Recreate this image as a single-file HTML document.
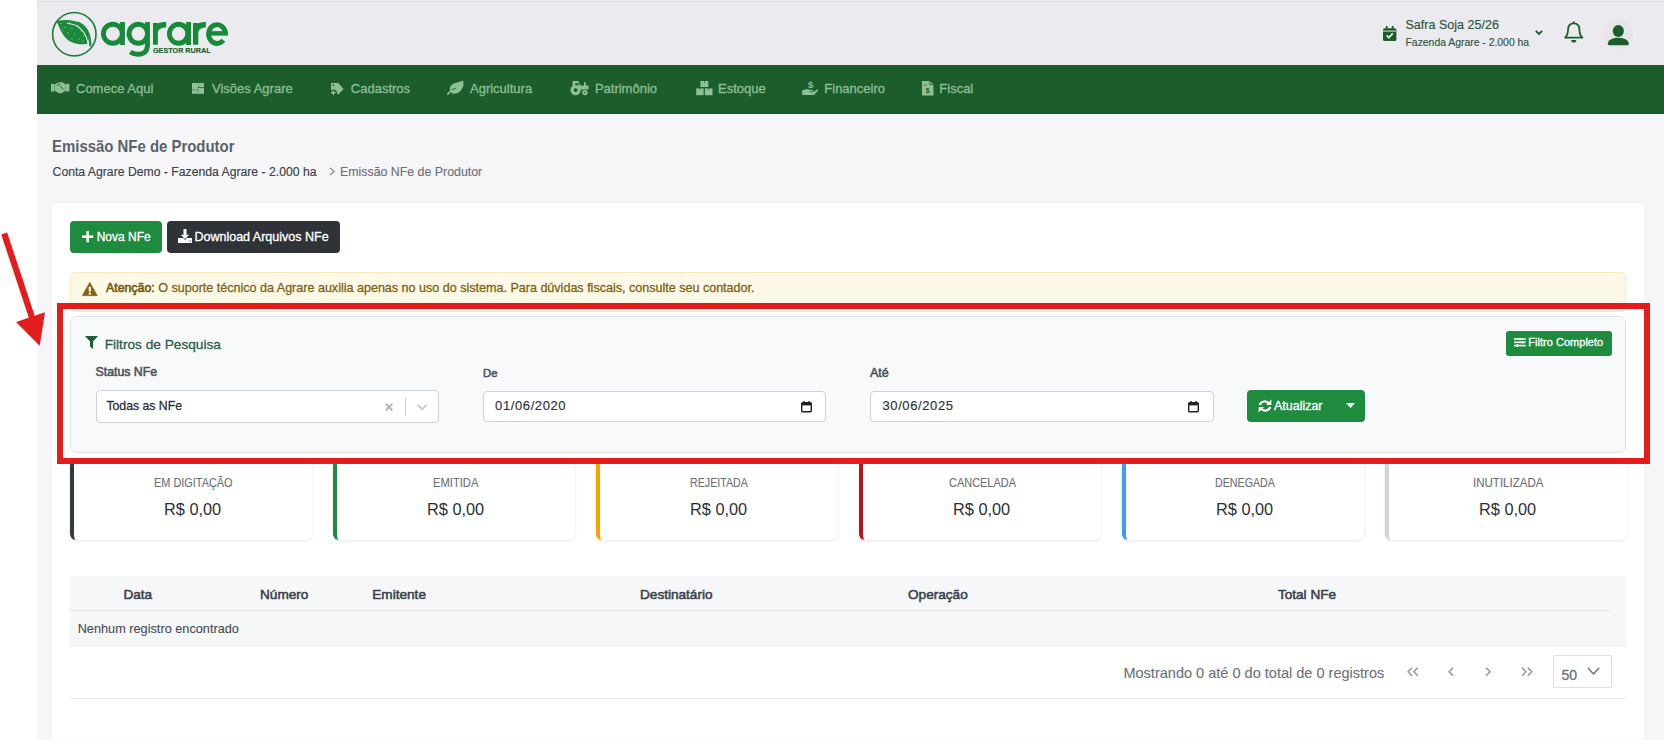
<!DOCTYPE html>
<html><head><meta charset="utf-8"><style>
html,body{margin:0;padding:0;}
body{width:1664px;height:740px;overflow:hidden;position:relative;background:#fff;font-family:"Liberation Sans",sans-serif;}
.t{position:absolute;white-space:nowrap;}
.b{position:absolute;box-sizing:border-box;}
svg.b{overflow:visible;}
</style></head><body>
<div class="b" style="left:37px;top:0px;width:1627px;height:740px;background:#f6f6f9"></div>
<div class="b" style="left:37px;top:0px;width:1627px;height:65px;background:#ebebef"></div>
<div class="b" style="left:37px;top:1px;width:1627px;height:1px;background:#dcdce2"></div>
<div class="b" style="left:37px;top:65px;width:1627px;height:49px;background:#1b5e2b"></div>
<svg class="b" style="left:48px;top:8px;width:52px;height:52px;" viewBox="0 0 52 52" preserveAspectRatio="none">
<circle cx="26.3" cy="26.2" r="21.7" fill="none" stroke="#1f7f3c" stroke-width="1.6"/>
<path d="M8.4,13 C19,10.5 31,12 37.5,19.5 C41.5,24 41.5,30 39.5,35.8 C30.5,37.5 22,35 16.8,29 C12.8,24.5 11,18 8.4,13 Z" fill="#1c8a3c"/>
<path d="M19,15.2 C30,16 38,22 40.6,37.8" fill="none" stroke="#ebebef" stroke-width="1.1"/><circle cx="13" cy="15.5" r="0.55" fill="#9fe0b0"/><circle cx="21.5" cy="13.8" r="0.55" fill="#9fe0b0"/><circle cx="17" cy="19.5" r="0.55" fill="#9fe0b0"/><circle cx="24" cy="20.5" r="0.55" fill="#9fe0b0"/><circle cx="30" cy="17" r="0.55" fill="#9fe0b0"/><circle cx="20" cy="25" r="0.55" fill="#9fe0b0"/><circle cx="27" cy="26" r="0.55" fill="#9fe0b0"/><circle cx="33" cy="23" r="0.55" fill="#9fe0b0"/><circle cx="24" cy="31" r="0.55" fill="#9fe0b0"/><circle cx="31" cy="31" r="0.55" fill="#9fe0b0"/><circle cx="35" cy="33" r="0.55" fill="#9fe0b0"/><circle cx="14.5" cy="22" r="0.55" fill="#9fe0b0"/><circle cx="36" cy="27.5" r="0.55" fill="#9fe0b0"/>
<path d="M29,14.2 C38,17.5 42.5,25 42.3,38.3" fill="none" stroke="#1c8a3c" stroke-width="2.2"/>
</svg>
<svg class="b" style="left:0px;top:0px;width:300px;height:70px;" viewBox="0 0 300 70" preserveAspectRatio="none">
<g fill="none" stroke="#178a3a" stroke-width="4.9">
<ellipse cx="112.85" cy="33.8" rx="9.45" ry="9.5"/>
<ellipse cx="138.3" cy="33.8" rx="9.25" ry="9.5"/>
<path d="M147.5,44 C147.5,53 142.5,54.2 138.2,54.2 C134.8,54.2 132.3,53.3 130.3,51.9"/>
<ellipse cx="178.6" cy="33.8" rx="9.2" ry="9.5"/>
<path d="M225.4,33.5 A8.4,9.4 0 1 0 223.3,40.3"/>
</g>
<g fill="#178a3a">
<rect x="120.1" y="22" width="4.8" height="23"/>
<rect x="145.1" y="22" width="4.8" height="23"/>
<rect x="186.1" y="22" width="4.9" height="23"/>
<rect x="208" y="31.1" width="19.9" height="4.5"/>
<path d="M153,44.8 V23 H157.9 V23.5 C159.5,22.5 162,22 166.2,22 V27.4 C162.5,27.4 159,28.6 157.9,31.6 V44.8 Z"/>
<path d="M193,44.8 V23 H198.3 V23.5 C199.8,22.5 202,22 205.9,22 V27.4 C202.5,27.4 199.3,28.6 198.3,31.6 V44.8 Z"/>
</g>
</svg>
<div class="t" style="left:153.00px;top:46.58px;font-size:7.23px;line-height:7.23px;font-weight:700;color:#1c5f2f;-webkit-text-stroke:0.15px #1c5f2f;">GESTOR RURAL</div>
<svg class="b" style="left:1382.8px;top:25.7px;width:13.400000000000091px;height:15.099999999999998px;" viewBox="0 0 13.4 15" preserveAspectRatio="none">
<rect x="0" y="2.2" width="13.4" height="12.8" rx="1.6" fill="#1b5e2b"/>
<rect x="2.8" y="0" width="1.8" height="3.6" fill="#1b5e2b"/>
<rect x="8.8" y="0" width="1.8" height="3.6" fill="#1b5e2b"/>
<rect x="0" y="4.6" width="13.4" height="0.9" fill="#ebebef"/>
<path d="M3.6,9.4 L5.8,11.6 L9.8,7.4" fill="none" stroke="#ebebef" stroke-width="1.7"/>
</svg>
<div class="t" style="left:1405.50px;top:18.58px;font-size:12.55px;line-height:12.55px;font-weight:400;color:#2f5540;-webkit-text-stroke:0.15px #2f5540;">Safra Soja 25/26</div>
<div class="t" style="left:1405.50px;top:37.50px;font-size:10.40px;line-height:10.40px;font-weight:400;color:#2f5540;-webkit-text-stroke:0.15px #2f5540;">Fazenda Agrare - 2.000 ha</div>
<svg class="b" style="left:1535px;top:30px;width:8px;height:5px;" viewBox="0 0 8 5" preserveAspectRatio="none"><path d="M0.8,0.8 L4,4 L7.2,0.8" fill="none" stroke="#1b5e2b" stroke-width="1.8"/></svg>
<svg class="b" style="left:1564px;top:21px;width:20px;height:22px;" viewBox="0 0 20 22" preserveAspectRatio="none">
<path d="M9.75,2.3 C6.2,2.3 4.2,4.9 4.1,8.6 C3.9,12.8 3.4,14.6 1.1,16.7 L18.4,16.7 C16.1,14.6 15.6,12.8 15.4,8.6 C15.3,4.9 13.3,2.3 9.75,2.3 Z" fill="none" stroke="#1b5e2b" stroke-width="1.8" stroke-linejoin="round"/>
<rect x="9" y="0.1" width="1.5" height="2.6" rx="0.7" fill="#1b5e2b"/>
<path d="M7.1,19 H12.4 C12.2,20.6 11.2,21.6 9.75,21.6 C8.3,21.6 7.3,20.6 7.1,19 Z" fill="#1b5e2b"/>
</svg>
<div class="b" style="left:1603px;top:19px;width:30px;height:30px;border-radius:50%;background:#e6e6ea"></div>
<svg class="b" style="left:1607px;top:24px;width:23px;height:22px;fill:#1b5e2b" viewBox="0 0 23 22" preserveAspectRatio="none">
<ellipse cx="11.3" cy="6.9" rx="5.6" ry="6"/>
<path d="M0.8,20.2 C0.8,16 5,13.8 11.3,13.8 C17.6,13.8 21.8,16 21.8,20.2 C21.8,21 21,21.2 20,21.2 L2.6,21.2 C1.6,21.2 0.8,21 0.8,20.2 Z"/>
</svg>
<div class="t" style="left:76.00px;top:81.80px;font-size:13.00px;line-height:13.00px;font-weight:400;color:#8fbf95;-webkit-text-stroke:0.3px #8fbf95;">Comece Aqui</div>
<div class="t" style="left:212.00px;top:81.80px;font-size:13.00px;line-height:13.00px;font-weight:400;color:#8fbf95;-webkit-text-stroke:0.3px #8fbf95;">Visões Agrare</div>
<div class="t" style="left:350.80px;top:81.80px;font-size:13.00px;line-height:13.00px;font-weight:400;color:#8fbf95;-webkit-text-stroke:0.3px #8fbf95;">Cadastros</div>
<div class="t" style="left:470.00px;top:81.80px;font-size:13.00px;line-height:13.00px;font-weight:400;color:#8fbf95;-webkit-text-stroke:0.3px #8fbf95;">Agricultura</div>
<div class="t" style="left:594.90px;top:81.80px;font-size:13.00px;line-height:13.00px;font-weight:400;color:#8fbf95;-webkit-text-stroke:0.3px #8fbf95;">Patrimônio</div>
<div class="t" style="left:718.00px;top:81.80px;font-size:13.00px;line-height:13.00px;font-weight:400;color:#8fbf95;-webkit-text-stroke:0.3px #8fbf95;">Estoque</div>
<div class="t" style="left:824.30px;top:81.80px;font-size:13.00px;line-height:13.00px;font-weight:400;color:#8fbf95;-webkit-text-stroke:0.3px #8fbf95;">Financeiro</div>
<div class="t" style="left:939.30px;top:81.80px;font-size:13.00px;line-height:13.00px;font-weight:400;color:#8fbf95;-webkit-text-stroke:0.3px #8fbf95;">Fiscal</div>
<svg class="b" style="left:51.3px;top:82px;width:18.400000000000006px;height:11.400000000000006px;fill:#8fbf95" viewBox="0 0 18.4 11.4" preserveAspectRatio="none">
<rect x="0" y="1.9" width="3.4" height="7.6"/>
<rect x="15" y="1.9" width="3.4" height="7.6"/>
<path d="M3.6,2.4 L7,0.6 C8.5,0 10.5,0 12,0.6 L14.8,2.4 L14.8,8.8 L11,11 C10,11.5 8.5,11.5 7.5,11 L3.6,8.8 Z"/>
<path d="M5.6,3.8 L9.2,1.6 M8.4,3.6 L12.6,7.6" stroke="#1b5e2b" stroke-width="0.9" fill="none"/>
</svg>
<svg class="b" style="left:192px;top:83px;width:12px;height:10.799999999999997px;fill:#8fbf95" viewBox="0 0 12 10.8" preserveAspectRatio="none">
<rect x="0" y="0" width="12" height="10.8"/>
<rect x="5.9" y="0" width="0.5" height="10.8" fill="#5c8a66"/>
<rect x="6" y="4" width="6" height="0.8" fill="#1b5e2b"/>
<rect x="0" y="6.6" width="6" height="0.7" fill="#4f7f5a"/>
</svg>
<svg class="b" style="left:330.7px;top:83px;width:12.600000000000023px;height:11.799999999999997px;fill:#8fbf95" viewBox="0 0 12.6 11.8" preserveAspectRatio="none">
<path d="M0,0 H7.3 L12.6,6 L7,11.8 L6.2,11 C6.4,8.6 5,6.6 2.6,6.6 C1.6,6.6 0.7,6.9 0,7.3 Z"/>
<rect x="1.5" y="7.6" width="1.6" height="4.2"/><rect x="0" y="8.9" width="4.6" height="1.5"/>
<circle cx="2.3" cy="2.1" r="0.9" fill="#1b5e2b"/>
</svg>
<svg class="b" style="left:447px;top:80px;width:17px;height:15px;fill:#8fbf95" viewBox="0 0 17 15" preserveAspectRatio="none">
<path d="M15.7,0.5 C12,3 6,2 3.5,6.5 C2,9.5 3,12.5 5.5,13.4 C10,14.8 15,11 16.3,6 C16.8,4 16.6,2 15.7,0.5 Z"/>
<path d="M0.9,14 C2.5,11.6 5,9.8 8.6,8.2" fill="none" stroke="#8fbf95" stroke-width="1.8" stroke-linecap="round"/>
<path d="M4.6,9.8 L8.8,8.3" fill="none" stroke="#1b5e2b" stroke-width="0.9"/>
</svg>
<svg class="b" style="left:570.2px;top:80.5px;width:18.5px;height:14.299999999999997px;fill:#8fbf95" viewBox="0 0 18.5 14.3" preserveAspectRatio="none">
<path d="M2.6,0 H8.3 L10.2,4.6 H14 V1 H15.6 V4.6 H18.5 V8.6 H10.4 L10.2,9.2 L2.6,7.5 Z"/>
<rect x="5.3" y="2.2" width="3.3" height="2.4" fill="#1b5e2b"/>
<circle cx="5.6" cy="9.1" r="5.2"/>
<circle cx="5.6" cy="9.1" r="1.9" fill="#1b5e2b"/>
<circle cx="14.9" cy="11.6" r="2.7"/>
<circle cx="14.9" cy="11.6" r="0.8" fill="#1b5e2b"/>
</svg>
<svg class="b" style="left:695.5px;top:80.8px;width:16.5px;height:14.200000000000003px;fill:#8fbf95" viewBox="0 0 16.5 14.2" preserveAspectRatio="none">
<rect x="4.4" y="0" width="7.9" height="6"/>
<rect x="0.2" y="7.4" width="7.4" height="6.8"/>
<rect x="8.9" y="7.4" width="7.6" height="6.8"/>
<rect x="8.1" y="0" width="0.7" height="1.7" fill="#1b5e2b"/>
<rect x="3.7" y="7.4" width="0.7" height="1.7" fill="#1b5e2b"/>
<rect x="12.4" y="7.4" width="0.7" height="1.7" fill="#1b5e2b"/>
</svg>
<svg class="b" style="left:802px;top:80px;width:16.200000000000045px;height:15.200000000000003px;fill:#8fbf95" viewBox="0 0 16.2 15.2" preserveAspectRatio="none">
<text x="8.6" y="8" font-size="9.5" font-weight="700" font-family="Liberation Sans" text-anchor="middle">$</text>
<path d="M0.2,10.5 L3,9.5 C5,9 7,9.2 9,10 L11,10.2 C12,10.3 12,11.5 11,11.6 L7.5,11.6 L7.5,12.2 L11.5,12.2 L15,9.6 C15.8,9 16.5,10 15.9,10.7 L12.5,14.6 C12.2,15 11.8,15.1 11.3,15.1 L0.2,15.1 Z"/>
</svg>
<svg class="b" style="left:922px;top:80.5px;width:11.5px;height:14.5px;fill:#8fbf95" viewBox="0 0 11.5 14.5" preserveAspectRatio="none">
<path d="M0,0 H7.8 L11.5,3.6 V14.5 H0 Z"/>
<path d="M7.8,0 V3.6 H11.5" fill="none" stroke="#1b5e2b" stroke-width="0.8"/>
<rect x="2.1" y="3.6" width="2.6" height="0.8" fill="#1b5e2b"/>
<text x="5.8" y="12.3" font-size="7" font-weight="700" font-family="Liberation Sans" text-anchor="middle" fill="#1b5e2b">$</text>
</svg>
<div class="t" style="left:52.40px;top:138.02px;font-size:16.40px;line-height:16.40px;font-weight:700;color:#59616d;transform:scaleX(0.9108);transform-origin:0 0;">Emissão NFe de Produtor</div>
<div class="t" style="left:52.60px;top:165.66px;font-size:12.21px;line-height:12.21px;font-weight:400;color:#3b424d;-webkit-text-stroke:0.15px #3b424d;">Conta Agrare Demo - Fazenda Agrare - 2.000 ha</div>
<svg class="b" style="left:329px;top:167px;width:6px;height:9px;" viewBox="0 0 6 9" preserveAspectRatio="none"><path d="M1,1 L5,4.5 L1,8" fill="none" stroke="#8a9099" stroke-width="1.4"/></svg>
<div class="t" style="left:340.00px;top:165.53px;font-size:12.37px;line-height:12.37px;font-weight:400;color:#6b717a;-webkit-text-stroke:0.15px #6b717a;">Emissão NFe de Produtor</div>
<div class="b" style="left:52px;top:203px;width:1592px;height:536px;background:#fff;box-shadow:0 -1px 2px rgba(0,0,0,0.03)"></div>
<div class="b" style="left:70px;top:221px;width:92px;height:32px;background:#1e8b3f;border-radius:4px"></div>
<svg class="b" style="left:81.7px;top:230.5px;width:11.299999999999997px;height:11.300000000000011px;fill:#fff" viewBox="0 0 11.3 11.3" preserveAspectRatio="none"><rect x="4.4" y="0" width="2.5" height="11.3"/><rect x="0" y="4.4" width="11.3" height="2.5"/></svg>
<div class="t" style="left:96.70px;top:231.05px;font-size:12.00px;line-height:12.00px;font-weight:400;color:#fff;-webkit-text-stroke:0.3px #fff;">Nova NFe</div>
<div class="b" style="left:167px;top:221px;width:173px;height:32px;background:#2f3237;border-radius:4px"></div>
<svg class="b" style="left:178px;top:229px;width:14px;height:14px;fill:#fff" viewBox="0 0 14 14" preserveAspectRatio="none">
<rect x="0" y="9" width="14" height="5"/>
<path d="M1.6,5 L12.4,5 L7,11 Z" fill="#2f3237"/>
<rect x="5.5" y="0" width="3" height="6"/><path d="M2.8,5.8 L11.2,5.8 L7,10 Z"/>
<rect x="10.6" y="11.6" width="0.9" height="0.9" fill="#2f3237"/><rect x="12" y="11.6" width="0.9" height="0.9" fill="#2f3237"/>
</svg>
<div class="t" style="left:194.40px;top:230.60px;font-size:12.52px;line-height:12.52px;font-weight:400;color:#fff;-webkit-text-stroke:0.3px #fff;">Download Arquivos NFe</div>
<div class="b" style="left:70px;top:272px;width:1556px;height:40px;background:#fef9e6;border:1px solid #f8e9bd;border-radius:5px"></div>
<svg class="b" style="left:81.8px;top:282px;width:15.600000000000009px;height:14px;fill:#806411" viewBox="0 0 15.6 14" preserveAspectRatio="none">
<path d="M7.8,0.4 L15.2,13.6 L0.4,13.6 Z" stroke="#806411" stroke-width="0.8" stroke-linejoin="round"/>
<rect x="6.7" y="4.8" width="2.2" height="4.8" fill="#fef9e6"/><rect x="6.7" y="10.6" width="2.2" height="2" fill="#fef9e6"/>
</svg>
<div class="t" style="left:106.00px;top:282.46px;font-size:12.34px;line-height:12.34px;font-weight:400;color:#6f5a10;-webkit-text-stroke:0.6px #6f5a10;">Atenção:</div>
<div class="t" style="left:158.20px;top:282.27px;font-size:12.56px;line-height:12.56px;font-weight:400;color:#7a6418;-webkit-text-stroke:0.3px #7a6418;">O suporte técnico da Agrare auxilia apenas no uso do sistema. Para dúvidas fiscais, consulte seu contador.</div>
<div class="b" style="left:70px;top:316px;width:1556px;height:137px;background:#f8f9fb;border:1px solid #dde1e6;border-radius:7px"></div>
<svg class="b" style="left:84.7px;top:335.5px;width:13.0px;height:13.100000000000023px;fill:#1b5e2f" viewBox="0 0 13 13" preserveAspectRatio="none"><path d="M0,0 L13,0 L8,5.5 L8,13 L5,10.5 L5,5.5 Z"/></svg>
<div class="t" style="left:104.70px;top:337.72px;font-size:13.68px;line-height:13.68px;font-weight:400;color:#2b5d49;-webkit-text-stroke:0.3px #2b5d49;">Filtros de Pesquisa</div>
<div class="b" style="left:1506px;top:331px;width:106px;height:25px;background:#1e8b3f;border-radius:3px"></div>
<svg class="b" style="left:1514px;top:336.5px;width:12px;height:11.0px;fill:#fff" viewBox="0 0 12 11" preserveAspectRatio="none">
<rect x="0" y="1.2" width="11.7" height="1.6"/><rect x="0" y="4.5" width="11.7" height="1.6"/><rect x="0" y="7.8" width="11.7" height="1.6"/>
<circle cx="6" cy="2" r="1.3"/><circle cx="8.4" cy="5.3" r="1.3"/><circle cx="3.2" cy="8.6" r="1.3"/>
</svg>
<div class="t" style="left:1528.30px;top:337.05px;font-size:11.05px;line-height:11.05px;font-weight:400;color:#fff;-webkit-text-stroke:0.3px #fff;">Filtro Completo</div>
<div class="t" style="left:95.50px;top:365.56px;font-size:12.34px;line-height:12.34px;font-weight:400;color:#4b525d;-webkit-text-stroke:0.55px #4b525d;">Status NFe</div>
<div class="b" style="left:95.5px;top:390.3px;width:343.5px;height:33.19999999999999px;background:#fff;border:1px solid #cdd2d8;border-radius:4px"></div>
<div class="t" style="left:106.40px;top:400.43px;font-size:12.25px;line-height:12.25px;font-weight:400;color:#2f3338;-webkit-text-stroke:0.3px #2f3338;">Todas as NFe</div>
<svg class="b" style="left:385px;top:403px;width:8.199999999999989px;height:8.199999999999989px;" viewBox="0 0 8.2 8.2" preserveAspectRatio="none"><path d="M0.8,0.8 L7.4,7.4 M7.4,0.8 L0.8,7.4" stroke="#adadad" stroke-width="1.7"/></svg>
<div class="b" style="left:405px;top:398px;width:1px;height:18px;background:#d0d0d0"></div>
<svg class="b" style="left:416.7px;top:404.4px;width:10.400000000000034px;height:6.100000000000023px;" viewBox="0 0 10.4 6.1" preserveAspectRatio="none"><path d="M0.8,0.8 L5.2,5.2 L9.6,0.8" fill="none" stroke="#c6c6c6" stroke-width="1.7"/></svg>
<div class="t" style="left:483.00px;top:368.40px;font-size:11.34px;line-height:11.34px;font-weight:400;color:#4b525d;-webkit-text-stroke:0.55px #4b525d;">De</div>
<div class="b" style="left:482.5px;top:391.4px;width:343.0px;height:30.200000000000045px;background:#fff;border:1px solid #cdd2d8;border-radius:4px"></div>
<div class="t" style="left:495.10px;top:398.80px;font-size:13.00px;line-height:13.00px;font-weight:400;color:#2f3338;-webkit-text-stroke:0.15px #2f3338;letter-spacing:0.6px">01/06/2020</div>
<svg class="b" style="left:801px;top:400.5px;width:11px;height:11.0px;fill:#222" viewBox="0 0 11 11" preserveAspectRatio="none"><rect x="0.7" y="1.8" width="9.6" height="9" rx="1" fill="none" stroke="#222" stroke-width="1.4"/>
<rect x="0.7" y="2" width="9.6" height="2.4" fill="#222"/><rect x="2.4" y="0" width="1.3" height="2"/><rect x="7.3" y="0" width="1.3" height="2"/></svg>
<div class="t" style="left:870.00px;top:367.40px;font-size:12.53px;line-height:12.53px;font-weight:400;color:#4b525d;-webkit-text-stroke:0.55px #4b525d;">Até</div>
<div class="b" style="left:870px;top:391.4px;width:344px;height:30.200000000000045px;background:#fff;border:1px solid #cdd2d8;border-radius:4px"></div>
<div class="t" style="left:882.50px;top:398.80px;font-size:13.00px;line-height:13.00px;font-weight:400;color:#2f3338;-webkit-text-stroke:0.15px #2f3338;letter-spacing:0.6px">30/06/2025</div>
<svg class="b" style="left:1188px;top:400.5px;width:11px;height:11.0px;fill:#222" viewBox="0 0 11 11" preserveAspectRatio="none"><rect x="0.7" y="1.8" width="9.6" height="9" rx="1" fill="none" stroke="#222" stroke-width="1.4"/>
<rect x="0.7" y="2" width="9.6" height="2.4" fill="#222"/><rect x="2.4" y="0" width="1.3" height="2"/><rect x="7.3" y="0" width="1.3" height="2"/></svg>
<div class="b" style="left:1246.6px;top:390.3px;width:118.10000000000014px;height:31.30000000000001px;background:#1e8b3f;border-radius:4px"></div>
<svg class="b" style="left:1257.5px;top:398.5px;width:14.0px;height:14.0px;fill:#fff" viewBox="0 0 14 14" preserveAspectRatio="none">
<path d="M11.2,4.6 A5.6,5.6 0 0 0 1.6,6" fill="none" stroke="#fff" stroke-width="2.2"/>
<path d="M2.8,9.4 A5.6,5.6 0 0 0 12.4,8" fill="none" stroke="#fff" stroke-width="2.2"/>
<path d="M13.4,0.6 L13.4,6 L8,6 Z"/><path d="M0.6,13.4 L0.6,8 L6,8 Z"/>
</svg>
<div class="t" style="left:1274.00px;top:400.45px;font-size:12.47px;line-height:12.47px;font-weight:400;color:#fff;-webkit-text-stroke:0.3px #fff;">Atualizar</div>
<svg class="b" style="left:1346px;top:403px;width:9px;height:5px;fill:#fff" viewBox="0 0 9 5" preserveAspectRatio="none"><path d="M0,0 L9,0 L4.5,5 Z"/></svg>
<div class="b" style="left:57px;top:303px;width:1593px;height:161px;border:6px solid #e31d1c"></div>
<svg class="b" style="left:0px;top:225px;width:50px;height:125px;" viewBox="0 0 50 125" preserveAspectRatio="none">
<path d="M4.2,8.5 L32.5,94" stroke="#e31d1c" stroke-width="6.2" fill="none"/>
<path d="M16,97 L45,87.3 L39.7,120.8 Z" fill="#e31d1c"/>
</svg>
<div class="b" style="left:70px;top:458px;width:241.5px;height:82px;background:#fff;border-left:4.5px solid #343a40;border-radius:6px;box-shadow:0 1px 3px rgba(0,0,0,0.10)"></div>
<div class="t" style="left:153.70px;top:476.76px;font-size:12.10px;line-height:12.10px;font-weight:400;color:#6b7079;-webkit-text-stroke:0.1px #6b7079;transform:scaleX(0.9017);transform-origin:0 0;">EM DIGITAÇÃO</div>
<div class="t" style="left:164.40px;top:501.22px;font-size:17.10px;line-height:17.10px;font-weight:400;color:#2b2f36;transform:scaleX(0.9551);transform-origin:0 0;">R$ 0,00</div>
<div class="b" style="left:333px;top:458px;width:241.5px;height:82px;background:#fff;border-left:4.5px solid #1f8a45;border-radius:6px;box-shadow:0 1px 3px rgba(0,0,0,0.10)"></div>
<div class="t" style="left:433.30px;top:476.76px;font-size:12.10px;line-height:12.10px;font-weight:400;color:#6b7079;-webkit-text-stroke:0.1px #6b7079;transform:scaleX(0.9251);transform-origin:0 0;">EMITIDA</div>
<div class="t" style="left:427.40px;top:501.22px;font-size:17.10px;line-height:17.10px;font-weight:400;color:#2b2f36;transform:scaleX(0.9551);transform-origin:0 0;">R$ 0,00</div>
<div class="b" style="left:596px;top:458px;width:241.5px;height:82px;background:#fff;border-left:4.5px solid #f2a500;border-radius:6px;box-shadow:0 1px 3px rgba(0,0,0,0.10)"></div>
<div class="t" style="left:690.05px;top:476.76px;font-size:12.10px;line-height:12.10px;font-weight:400;color:#6b7079;-webkit-text-stroke:0.1px #6b7079;transform:scaleX(0.8818);transform-origin:0 0;">REJEITADA</div>
<div class="t" style="left:690.40px;top:501.22px;font-size:17.10px;line-height:17.10px;font-weight:400;color:#2b2f36;transform:scaleX(0.9551);transform-origin:0 0;">R$ 0,00</div>
<div class="b" style="left:859px;top:458px;width:241.5px;height:82px;background:#fff;border-left:4.5px solid #b8141b;border-radius:6px;box-shadow:0 1px 3px rgba(0,0,0,0.10)"></div>
<div class="t" style="left:948.50px;top:476.76px;font-size:12.10px;line-height:12.10px;font-weight:400;color:#6b7079;-webkit-text-stroke:0.1px #6b7079;transform:scaleX(0.9058);transform-origin:0 0;">CANCELADA</div>
<div class="t" style="left:953.40px;top:501.22px;font-size:17.10px;line-height:17.10px;font-weight:400;color:#2b2f36;transform:scaleX(0.9551);transform-origin:0 0;">R$ 0,00</div>
<div class="b" style="left:1122px;top:458px;width:241.5px;height:82px;background:#fff;border-left:4.5px solid #3c9df0;border-radius:6px;box-shadow:0 1px 3px rgba(0,0,0,0.10)"></div>
<div class="t" style="left:1215.00px;top:476.76px;font-size:12.10px;line-height:12.10px;font-weight:400;color:#6b7079;-webkit-text-stroke:0.1px #6b7079;transform:scaleX(0.8835);transform-origin:0 0;">DENEGADA</div>
<div class="t" style="left:1216.40px;top:501.22px;font-size:17.10px;line-height:17.10px;font-weight:400;color:#2b2f36;transform:scaleX(0.9551);transform-origin:0 0;">R$ 0,00</div>
<div class="b" style="left:1385px;top:458px;width:241.5px;height:82px;background:#fff;border-left:4.5px solid #d4d4d4;border-radius:6px;box-shadow:0 1px 3px rgba(0,0,0,0.10)"></div>
<div class="t" style="left:1472.75px;top:476.76px;font-size:12.10px;line-height:12.10px;font-weight:400;color:#6b7079;-webkit-text-stroke:0.1px #6b7079;transform:scaleX(0.9533);transform-origin:0 0;">INUTILIZADA</div>
<div class="t" style="left:1479.40px;top:501.22px;font-size:17.10px;line-height:17.10px;font-weight:400;color:#2b2f36;transform:scaleX(0.9551);transform-origin:0 0;">R$ 0,00</div>
<div class="b" style="left:57px;top:458px;width:1593px;height:6px;background:#e31d1c"></div>
<div class="b" style="left:70px;top:576px;width:1556px;height:69px;background:#f6f7f9"></div>
<div class="b" style="left:70px;top:610px;width:1541px;height:1px;background:#e3e6ea"></div>
<div class="b" style="left:70px;top:645px;width:1556px;height:1px;background:#e3e6ea"></div>
<div class="t" style="left:123.40px;top:587.69px;font-size:13.60px;line-height:13.60px;font-weight:400;color:#3c424b;-webkit-text-stroke:0.55px #3c424b;">Data</div>
<div class="t" style="left:260.00px;top:587.69px;font-size:13.60px;line-height:13.60px;font-weight:400;color:#3c424b;-webkit-text-stroke:0.55px #3c424b;">Número</div>
<div class="t" style="left:372.30px;top:587.69px;font-size:13.60px;line-height:13.60px;font-weight:400;color:#3c424b;-webkit-text-stroke:0.55px #3c424b;">Emitente</div>
<div class="t" style="left:640.00px;top:587.69px;font-size:13.60px;line-height:13.60px;font-weight:400;color:#3c424b;-webkit-text-stroke:0.55px #3c424b;">Destinatário</div>
<div class="t" style="left:908.00px;top:587.69px;font-size:13.60px;line-height:13.60px;font-weight:400;color:#3c424b;-webkit-text-stroke:0.55px #3c424b;">Operação</div>
<div class="t" style="left:1277.90px;top:587.69px;font-size:13.60px;line-height:13.60px;font-weight:400;color:#3c424b;-webkit-text-stroke:0.55px #3c424b;">Total NFe</div>
<div class="t" style="left:77.70px;top:622.82px;font-size:12.73px;line-height:12.73px;font-weight:400;color:#474c53;-webkit-text-stroke:0.1px #474c53;">Nenhum registro encontrado</div>
<div class="t" style="left:1123.40px;top:666.40px;font-size:14.54px;line-height:14.54px;font-weight:400;color:#6d7177;-webkit-text-stroke:0.1px #6d7177;">Mostrando 0 até 0 do total de 0 registros</div>
<svg class="b" style="left:1406.7px;top:667.4px;width:11.799999999999955px;height:9.600000000000023px;" viewBox="0 0 11.8 9.6" preserveAspectRatio="none"><path d="M5,0.8 L1,4.8 L5,8.8 M10.8,0.8 L6.8,4.8 L10.8,8.8" fill="none" stroke="#8e9298" stroke-width="1.4"/></svg>
<svg class="b" style="left:1448px;top:667.4px;width:6px;height:9.600000000000023px;" viewBox="0 0 6 9.6" preserveAspectRatio="none"><path d="M5,0.8 L1,4.8 L5,8.8" fill="none" stroke="#8e9298" stroke-width="1.4"/></svg>
<svg class="b" style="left:1485.3px;top:667.4px;width:6.0px;height:9.600000000000023px;" viewBox="0 0 6 9.6" preserveAspectRatio="none"><path d="M1,0.8 L5,4.8 L1,8.8" fill="none" stroke="#8e9298" stroke-width="1.4"/></svg>
<svg class="b" style="left:1521px;top:667.4px;width:11.799999999999955px;height:9.600000000000023px;" viewBox="0 0 11.8 9.6" preserveAspectRatio="none"><path d="M1,0.8 L5,4.8 L1,8.8 M6.8,0.8 L10.8,4.8 L6.8,8.8" fill="none" stroke="#8e9298" stroke-width="1.4"/></svg>
<div class="b" style="left:1553.4px;top:655.4px;width:58.59999999999991px;height:33.10000000000002px;background:#fff;border:1px solid #dcdfe3;border-radius:2px"></div>
<div class="t" style="left:1561.50px;top:667.55px;font-size:14.00px;line-height:14.00px;font-weight:400;color:#6d7177;-webkit-text-stroke:0.3px #6d7177;">50</div>
<svg class="b" style="left:1587px;top:667.4px;width:13px;height:8.100000000000023px;" viewBox="0 0 13 8" preserveAspectRatio="none"><path d="M0.8,0.8 L6.5,6.8 L12.2,0.8" fill="none" stroke="#6d7177" stroke-width="1.4"/></svg>
<div class="b" style="left:70px;top:698px;width:1556px;height:1px;background:#e3e6ea"></div>
</body></html>
